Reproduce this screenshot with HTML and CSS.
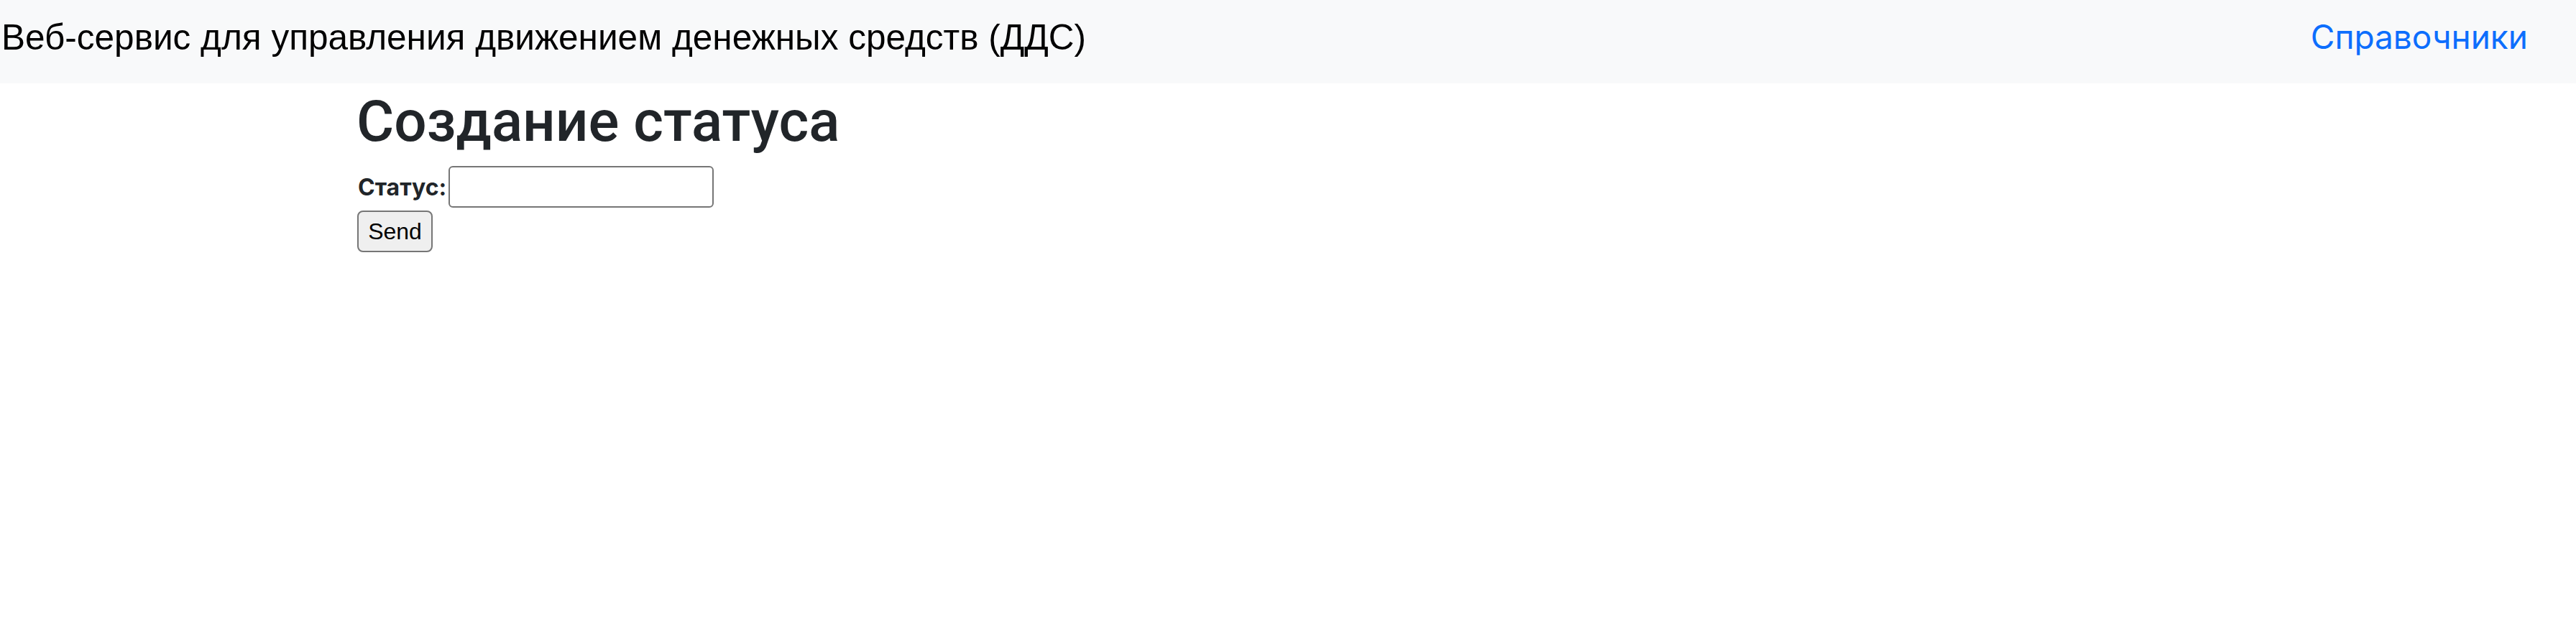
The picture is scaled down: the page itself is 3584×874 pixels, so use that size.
FILE: index.html
```html
<!DOCTYPE html>
<html lang="ru">
<head>
<meta charset="utf-8">
<title>Создание статуса</title>
<link rel="stylesheet" href="styles.css">
</head>
<body>
<nav class="navbar">
  <span class="brand">Веб-сервис для управления движением денежных средств (ДДС)</span>
  <a class="nav-link" href="#">Справочники</a>
</nav>
<main class="container">
  <h1 class="title">Создание статуса</h1>
  <form class="form">
    <div class="field">
      <label class="label" for="status">Статус:</label>
      <input class="input" id="status" type="text">
    </div>
    <button class="btn" type="button">Send</button>
  </form>
</main>
</body>
</html>
```

FILE: styles.css
```css
html, body {
  margin: 0;
  padding: 0;
  background: #fff;
}
body {
  font-family: Inter, "Noto Sans", sans-serif;
  color: #212529;
}
.navbar {
  display: flex;
  justify-content: space-between;
  align-items: center;
  height: 116px;
  background: #f8f9fa;
  box-sizing: border-box;
}
.brand {
  font-family: "Liberation Sans", Arial, sans-serif;
  font-size: 49.5px;
  color: #000;
  padding-left: 2px;
  margin-top: -14px;
}
.nav-link {
  font-family: Inter, "Noto Sans", sans-serif;
  font-size: 46px;
  color: #0d6efd;
  text-decoration: none;
  margin-right: 67px;
  margin-top: -14px;
}
.container {
  box-sizing: border-box;
  max-width: 2640px;
  margin: 0 auto;
  padding: 0 24px;
}
.title {
  font-family: Roboto, Inter, sans-serif;
  font-weight: 500;
  font-size: 80px;
  line-height: 1.2;
  margin: 5px 0 14px 0;
  color: #212529;
}
.form {
  display: flex;
  flex-direction: column;
  align-items: flex-start;
  gap: 4px;
}
.field {
  display: flex;
  align-items: center;
  gap: 3px;
}
.label {
  font-family: Inter, "Noto Sans", sans-serif;
  font-weight: 700;
  font-size: 32px;
  color: #212529;
  padding-left: 2px;
}
.input {
  box-sizing: border-box;
  width: 369px;
  height: 58px;
  border: 2px solid #767676;
  border-radius: 6px;
  padding: 0 4px;
  background: #fff;
  font-size: 28px;
}
.btn {
  box-sizing: border-box;
  width: 105px;
  height: 58px;
  margin-left: 1px;
  background: #efefef;
  border: 2px solid #767676;
  border-radius: 8px;
  font-family: "Liberation Sans", Arial, sans-serif;
  font-size: 32px;
  color: #000;
  padding: 0;
}
```
